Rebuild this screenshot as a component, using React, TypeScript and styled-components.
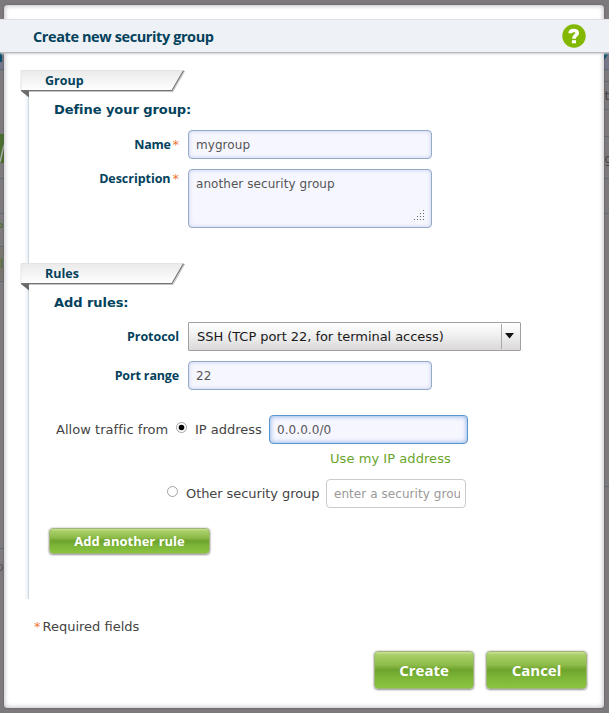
import React from 'react';
import styled, { createGlobalStyle } from 'styled-components';

const Global = createGlobalStyle`
  * { box-sizing: border-box; }
  body { margin: 0; background: #7d797d; overflow: hidden; font: 13px/16px "DejaVu Sans", sans-serif; color: #444; }
  input, textarea, button { font: inherit; margin: 0; }
`;

const Page = styled.div`
  position: relative;
  width: 609px;
  height: 713px;
  padding: 5px 4px 0;
  background: #7d797d;
`;

const Backdrop = styled.svg`
  position: absolute;
  inset: 0;
`;

const Dialog = styled.main`
  position: relative;
  width: 600px;
  height: 703px;
  padding-top: 14px;
  border-radius: 4px;
  background: #fff;
  box-shadow: inset 0 0 4px 1px #c3c1c5, 0 0 2px #555;
`;

const Header = styled.header`
  position: relative;
  display: flex;
  align-items: center;
  justify-content: space-between;
  width: 609px;
  height: 34px;
  margin-left: -4px;
  padding: 0 23px 0 33px;
  background: #eef1f6;
  border-top: 1px solid #e2dde4;
  border-bottom: 1px solid #b9babd;
  box-shadow: 0 1px 2px #cfcfd2;
`;

const Title = styled.h1`
  margin: 1px 0 0;
  font: bold 14.5px/20px "Open Sans", sans-serif;
  letter-spacing: -0.4px;
  color: #03425c;
`;

const Form = styled.div`
  height: 529px;
  margin: 17px 0 0 16px;
  background: linear-gradient(90deg, #f8fbfd, #e8f1f7 75%, #ced9e0 76%) 5px 0 / 4px 100% no-repeat;
`;

const Section = styled.section<{ $height: number }>`
  height: ${(p) => p.$height}px;
`;

const TabBox = styled.div`
  display: grid;
  height: 27px;
  width: 170px;
  & > * { grid-area: 1 / 1; }
`;

const TabLabel = styled.h2`
  z-index: 1;
  margin: 1px 0 0 25px;
  font: bold 12.5px/19px "Open Sans", sans-serif;
  color: #03425c;
`;

const Heading = styled.h3`
  height: 24px;
  margin: 0 0 0 34px;
  font: bold 13px/25px "DejaVu Sans", sans-serif;
  letter-spacing: -0.06px;
  color: #03425c;
`;

const Fields = styled.div<{ $top: number }>`
  display: flex;
  flex-direction: column;
  gap: 10px;
  padding-top: ${(p) => p.$top}px;
`;

const Row = styled.div`
  display: flex;
  gap: 9px;
`;

const Label = styled.label<{ $top?: number; $spacing?: number }>`
  display: flex;
  justify-content: flex-end;
  width: 159px;
  height: 20px;
  margin-top: ${(p) => p.$top ?? 5}px;
  font: bold 12.5px/20px "Open Sans", sans-serif;
  letter-spacing: ${(p) => p.$spacing ?? -0.15}px;
  color: #03425c;
`;

const Star = styled.span`
  margin-left: 2px;
  font: 13px/20px "DejaVu Sans", sans-serif;
  letter-spacing: 0;
  color: #ee7638;
`;

const Input = styled.input<{ $width?: number; $focus?: boolean; $plain?: boolean }>`
  width: ${(p) => p.$width ?? 244}px;
  height: 29px;
  padding: 0 ${(p) => (p.$plain ? 5 : 7)}px 0 7px;
  border: 1px solid ${(p) => (p.$plain ? '#ccc9cf' : p.$focus ? '#5c96cf' : '#93abc8')};
  border-radius: 4px;
  outline: 0;
  background: ${(p) => (p.$plain ? '#fff' : '#f6f6ff')};
  box-shadow: ${(p) => (p.$plain ? 'none' : p.$focus ? 'inset 0 0 4px 1px #9fbce7' : 'inset 0 0 4px #c4cee5')};
  font-size: 12px;
  letter-spacing: 0.06px;
  color: #555;
  &::placeholder { color: #999; opacity: 1; }
`;

const AreaBox = styled.div`
  position: relative;
  width: 244px;
  height: 59px;
`;

const Area = styled.textarea`
  display: block;
  width: 100%;
  height: 100%;
  padding: 6px 7px;
  resize: none;
  border: 1px solid #93abc8;
  border-radius: 4px;
  outline: 0;
  background: #f6f6ff;
  box-shadow: inset 0 0 4px #c4cee5;
  font-size: 12px;
  letter-spacing: 0.06px;
  color: #555;
`;

const Grip = styled.svg`
  position: absolute;
  right: 7px;
  bottom: 7px;
`;

const Select = styled.div`
  display: flex;
  align-items: center;
  justify-content: space-between;
  width: 333px;
  height: 29px;
  padding-left: 8px;
  border: 1px solid #a2a09f;
  border-radius: 1px;
  background: linear-gradient(#fff, #f1f0f0 45%, #dad8d8);
  letter-spacing: -0.05px;
  color: #1a1a1a;
`;

const Arrow = styled.span`
  display: flex;
  align-items: center;
  width: 19px;
  height: 25px;
  padding: 0 0 2px 3px;
  border-left: 1px solid #aaa8a7;
`;

const Traffic = styled.div<{ $left: number }>`
  display: flex;
  align-items: center;
  height: 29px;
  padding-left: ${(p) => p.$left}px;
  white-space: nowrap;
`;

const Radio = styled.svg`
  flex: none;
  margin: -4px 7px 0 8px;
`;

const Caption = styled.span<{ $width: number; $spacing?: number }>`
  width: ${(p) => p.$width}px;
  letter-spacing: ${(p) => p.$spacing ?? 0}px;
`;

const IpLink = styled.a`
  display: block;
  height: 35px;
  margin-left: 310px;
  line-height: 29px;
  letter-spacing: 0.06px;
  color: #6aa52b;
`;

const Button = styled.button<{ $small?: boolean; $width: number }>`
  width: ${(p) => p.$width}px;
  height: ${(p) => (p.$small ? 26 : 38)}px;
  padding: 0;
  border: 1px solid #a0b578;
  border-radius: 4px;
  background: linear-gradient(#cce397 0, #a9cf68 8%, #8fbc4b 35%, #6da32c 50%, #7db538 70%, #8ac43f 100%);
  box-shadow: 0 0 2px #b3adb3, 0 1px 2px #999;
  color: #fff;
  font-family: "Open Sans", sans-serif;
  font-weight: bold;
  font-size: ${(p) => (p.$small ? 13 : 15)}px;
  line-height: 20px;
`;

const AddRow = styled.div`
  padding: 20px 0 0 29px;
`;

const Required = styled.p`
  margin: 20px 0 0 30px;
  line-height: 16px;
  color: #444;
  span { margin-right: 2px; color: #ee7638; }
`;

const Footer = styled.footer`
  display: flex;
  justify-content: flex-end;
  gap: 12px;
  margin-top: 16px;
  padding-right: 17px;
`;

function Tab({ id, children }: { id: string; children: React.ReactNode }) {
  return (
    <TabBox>
      <svg width="170" height="28" viewBox="0 0 170 28">
        <defs>
          <linearGradient id={id} x2="0" y2="1">
            <stop offset="0" stopColor="#ebeaeb" />
            <stop offset=".45" stopColor="#f4f3f4" />
            <stop offset="1" stopColor="#fff" />
          </linearGradient>
        </defs>
        <path d="M1 .5H163.500L152 20.500H1Z" fill={`url(#${id})`} stroke="#e0dee1" strokeWidth=".8" />
        <path d="M1.500 21.500H153L164.700 1" fill="none" stroke="#c5c5c5" />
        <path d="M1 20.500H152L163.500 .8" fill="none" stroke="#737373" strokeWidth="1.200" />
        <path d="M1 21H9V27.500Z" fill="#6b6b6b" />
      </svg>
      <TabLabel>{children}</TabLabel>
    </TabBox>
  );
}

function PageEdges() {
  return (
    <Backdrop width="609" height="713" fontFamily="DejaVu Sans" fontSize="12">
      <path d="M0 53H2V62H0ZM604 53H609L604 60Z" fill="#07506f" />
      <path d="M0 62H4V69H0ZM604 61L609 54V69H604Z" fill="#77788a" />
      <path d="M0 69.500H4M604 69.500H609M604 81.500H609M604 109.500H609M0 178.500H4M0 213.500H4M0 246.500H4M0 281.500H4M0 548.500H4M604 136.500H609M604 178.500H609M604 213.500H609M604 486.500H609" stroke="#626974" />
      <path d="M0 134H4V163H0Z" fill="#496e2d" />
      <path d="M0 247H4V280H0Z" fill="#77756e" />
      <path d="M0 162L4 145" stroke="#aaa" strokeWidth="1.500" />
      <text x="-4" y="232" fill="#4d6f2d">P</text>
      <text x="0" y="268" fill="#4d6f2d">l</text>
      <text x="-4" y="571" fill="#555">p</text>
      <text x="604.500" y="100" fill="#454545">t</text>
      <text x="604.500" y="163" fill="#454545">g</text>
    </Backdrop>
  );
}

function RadioMark({ on }: { on?: boolean }) {
  return (
    <Radio width="12" height="12" viewBox="0 0 12 12">
      <circle cx="5.500" cy="5.500" r="5" fill="#fff" stroke="#999" strokeWidth=".9" />
      {on && <circle cx="5.500" cy="5.500" r="2.800" fill="#000" />}
    </Radio>
  );
}

export default function App() {
  return (
    <>
      <Global />
      <Page>
        <PageEdges />
        <Dialog>
          <Header>
            <Title>Create new security group</Title>
            <svg width="24" height="24" viewBox="0 0 24 24">
              <circle cx="12" cy="12" r="11.700" fill="#82b800" />
              <path d="M8.200 9.200C8.200 5.700 15.300 5.500 15.300 9C15.300 11.400 11.900 11.200 11.900 14.700" fill="none" stroke="#fff" strokeWidth="3.600" />
              <path d="M9.900 16.200H14V19.300H9.900Z" fill="#fff" />
            </svg>
          </Header>
          <Form>
            <Section $height={193}>
              <Tab id="groupFill">Group</Tab>
              <Heading>Define your group:</Heading>
              <Fields $top={9}>
                <Row>
                  <Label $spacing={-0.3}>Name<Star>*</Star></Label>
                  <Input defaultValue="mygroup" />
                </Row>
                <Row>
                  <Label $top={0} $spacing={-0.05}>Description<Star>*</Star></Label>
                  <AreaBox>
                    <Area defaultValue="another security group" />
                    <Grip width="12" height="12" viewBox="0 0 12 12">
                      <path d="M10 1.500h1M7 4.500h1M10 4.500h1M4 7.500h1M7 7.500h1M10 7.500h1M1 10.500h1M4 10.500h1M7 10.500h1M10 10.500h1" stroke="#666" />
                    </Grip>
                  </AreaBox>
                </Row>
              </Fields>
            </Section>
            <Section $height={336}>
              <Tab id="rulesFill">Rules</Tab>
              <Heading>Add rules:</Heading>
              <Fields $top={8}>
                <Row>
                  <Label $spacing={-0.05}>Protocol</Label>
                  <Select>
                    SSH (TCP port 22, for terminal access)
                    <Arrow>
                      <svg width="9" height="6" viewBox="0 0 9 6"><path d="M0 0H9L4.500 5.500Z" fill="#111" /></svg>
                    </Arrow>
                  </Select>
                </Row>
                <Row>
                  <Label>Port range</Label>
                  <Input defaultValue="22" />
                </Row>
              </Fields>
              <Fields $top={25}>
                <Traffic $left={36}>
                  <Caption $width={112} $spacing={0.04}>Allow traffic from</Caption>
                  <RadioMark on />
                  <Caption $width={74}>IP address</Caption>
                  <Input $width={199} $focus defaultValue="0.0.0.0/0" />
                </Traffic>
              </Fields>
              <IpLink>Use my IP address</IpLink>
              <Traffic $left={139}>
                <RadioMark />
                <Caption $width={140} $spacing={-0.07}>Other security group</Caption>
                <Input $width={140} $plain placeholder="enter a security group" />
              </Traffic>
              <AddRow>
                <Button $small $width={161}>Add another rule</Button>
              </AddRow>
            </Section>
          </Form>
          <Required><span>*</span>Required fields</Required>
          <Footer>
            <Button $width={100}>Create</Button>
            <Button $width={101}>Cancel</Button>
          </Footer>
        </Dialog>
      </Page>
    </>
  );
}
